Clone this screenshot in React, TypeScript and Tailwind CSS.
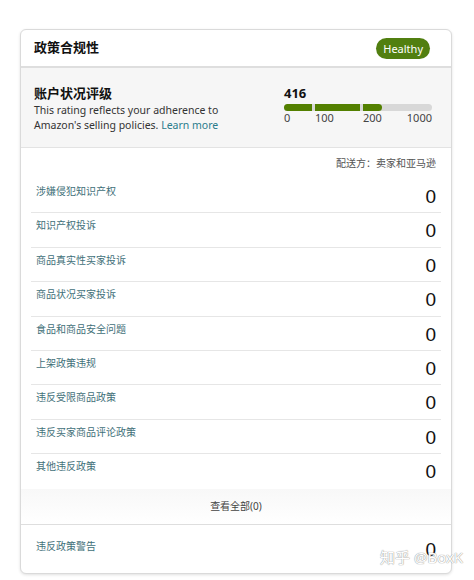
import React from "react";

const rows = [
  "涉嫌侵犯知识产权",
  "知识产权投诉",
  "商品真实性买家投诉",
  "商品状况买家投诉",
  "食品和商品安全问题",
  "上架政策违规",
  "违反受限商品政策",
  "违反买家商品评论政策",
  "其他违反政策",
];

const font = { fontFamily: '"Noto Sans", "Noto Sans CJK SC", sans-serif' };

function MetricRow({ label, last }: { label: string; last?: boolean }) {
  return (
    <div className={`flex h-[34.4px] justify-between px-[5px] ${last ? "" : "border-b border-[#e6e6e6]"}`}>
      <span className="pt-[5px] text-[10px] leading-[14px] text-[#3f7079]">{label}</span>
      <span className="pt-[6px] text-[19px] leading-[24px] text-[#111]" style={{ fontFamily: '"Liberation Sans", sans-serif' }}>
        0
      </span>
    </div>
  );
}

export default function App() {
  return (
    <div className="relative h-[580px] w-[474px] bg-white pt-[29px] pl-[20px]" style={font}>
      <div className="w-[432px] overflow-hidden rounded-[6px] border border-[#dadada] bg-white shadow-[0_1px_3px_rgba(0,0,0,0.12)]">
        {/* header */}
        <div className="flex h-[38px] items-center justify-between border-b-2 border-[#dedede] pl-[13px] pr-[21px]">
          <span className="text-[13px] font-bold text-[#111]">政策合规性</span>
          <span className="rounded-full bg-[#517f10] px-[7px] py-[2px] text-[11px] leading-[17px] text-white">Healthy</span>
        </div>

        {/* account health rating */}
        <div className="flex h-[80px] justify-between border-b border-[#e3e3e3] bg-[#f6f6f6] pl-[13px] pr-[19px] pt-[16px]">
          <div>
            <div className="text-[13px] font-bold leading-[18px] text-[#111]">账户状况评级</div>
            <div className="mt-[1px] text-[10.5px] leading-[15px] text-[#333]">
              This rating reflects your adherence to
              <br />
              Amazon's selling policies. <span className="text-[#2a7c8c]">Learn more</span>
            </div>
          </div>
          <div className="w-[148px]">
            <div className="text-[13px] font-bold leading-[18px] text-[#111]">416</div>
            <div className="mt-[2px] flex h-[7px] gap-[3px] rounded-full bg-[#d8d8d8]">
              <div className="w-[28px] rounded-l-full bg-[#538000]" />
              <div className="w-[45px] bg-[#538000]" />
              <div className="w-[19px] rounded-r-full bg-[#538000]" />
            </div>
            <div className="flex text-[11px] leading-[14px] text-[#444]">
              <span className="w-[31px]">0</span>
              <span className="w-[48px]">100</span>
              <span>200</span>
              <span className="ml-auto">1000</span>
            </div>
          </div>
        </div>

        {/* metrics */}
        <div className="px-[10px]">
          <div className="flex h-[31px] items-center justify-end px-[5px] text-[10px] text-[#555]">配送方：卖家和亚马逊</div>
          {rows.map((r, i) => (
            <MetricRow key={r} label={r} last={i === rows.length - 1} />
          ))}
        </div>
        <div className="flex h-[36px] items-center justify-center border-b border-[#dedede] bg-gradient-to-b from-[#f8f8f8] to-white text-[10px] text-[#444]">
          查看全部(0)
        </div>
        <div className="flex h-[48px] justify-between px-[15px]">
          <span className="pt-[14px] text-[10px] leading-[14px] text-[#3f7079]">违反政策警告</span>
          <span className="pt-[13px] text-[19px] leading-[24px] text-[#111]" style={{ fontFamily: '"Liberation Sans", sans-serif' }}>
            0
          </span>
        </div>
      </div>

      {/* watermark */}
      <div className="absolute left-[380px] top-[546px] text-[15px] text-white [text-shadow:0_0_1px_#999,0_0_1px_#999]">
        知乎 @BoxK
      </div>
    </div>
  );
}
